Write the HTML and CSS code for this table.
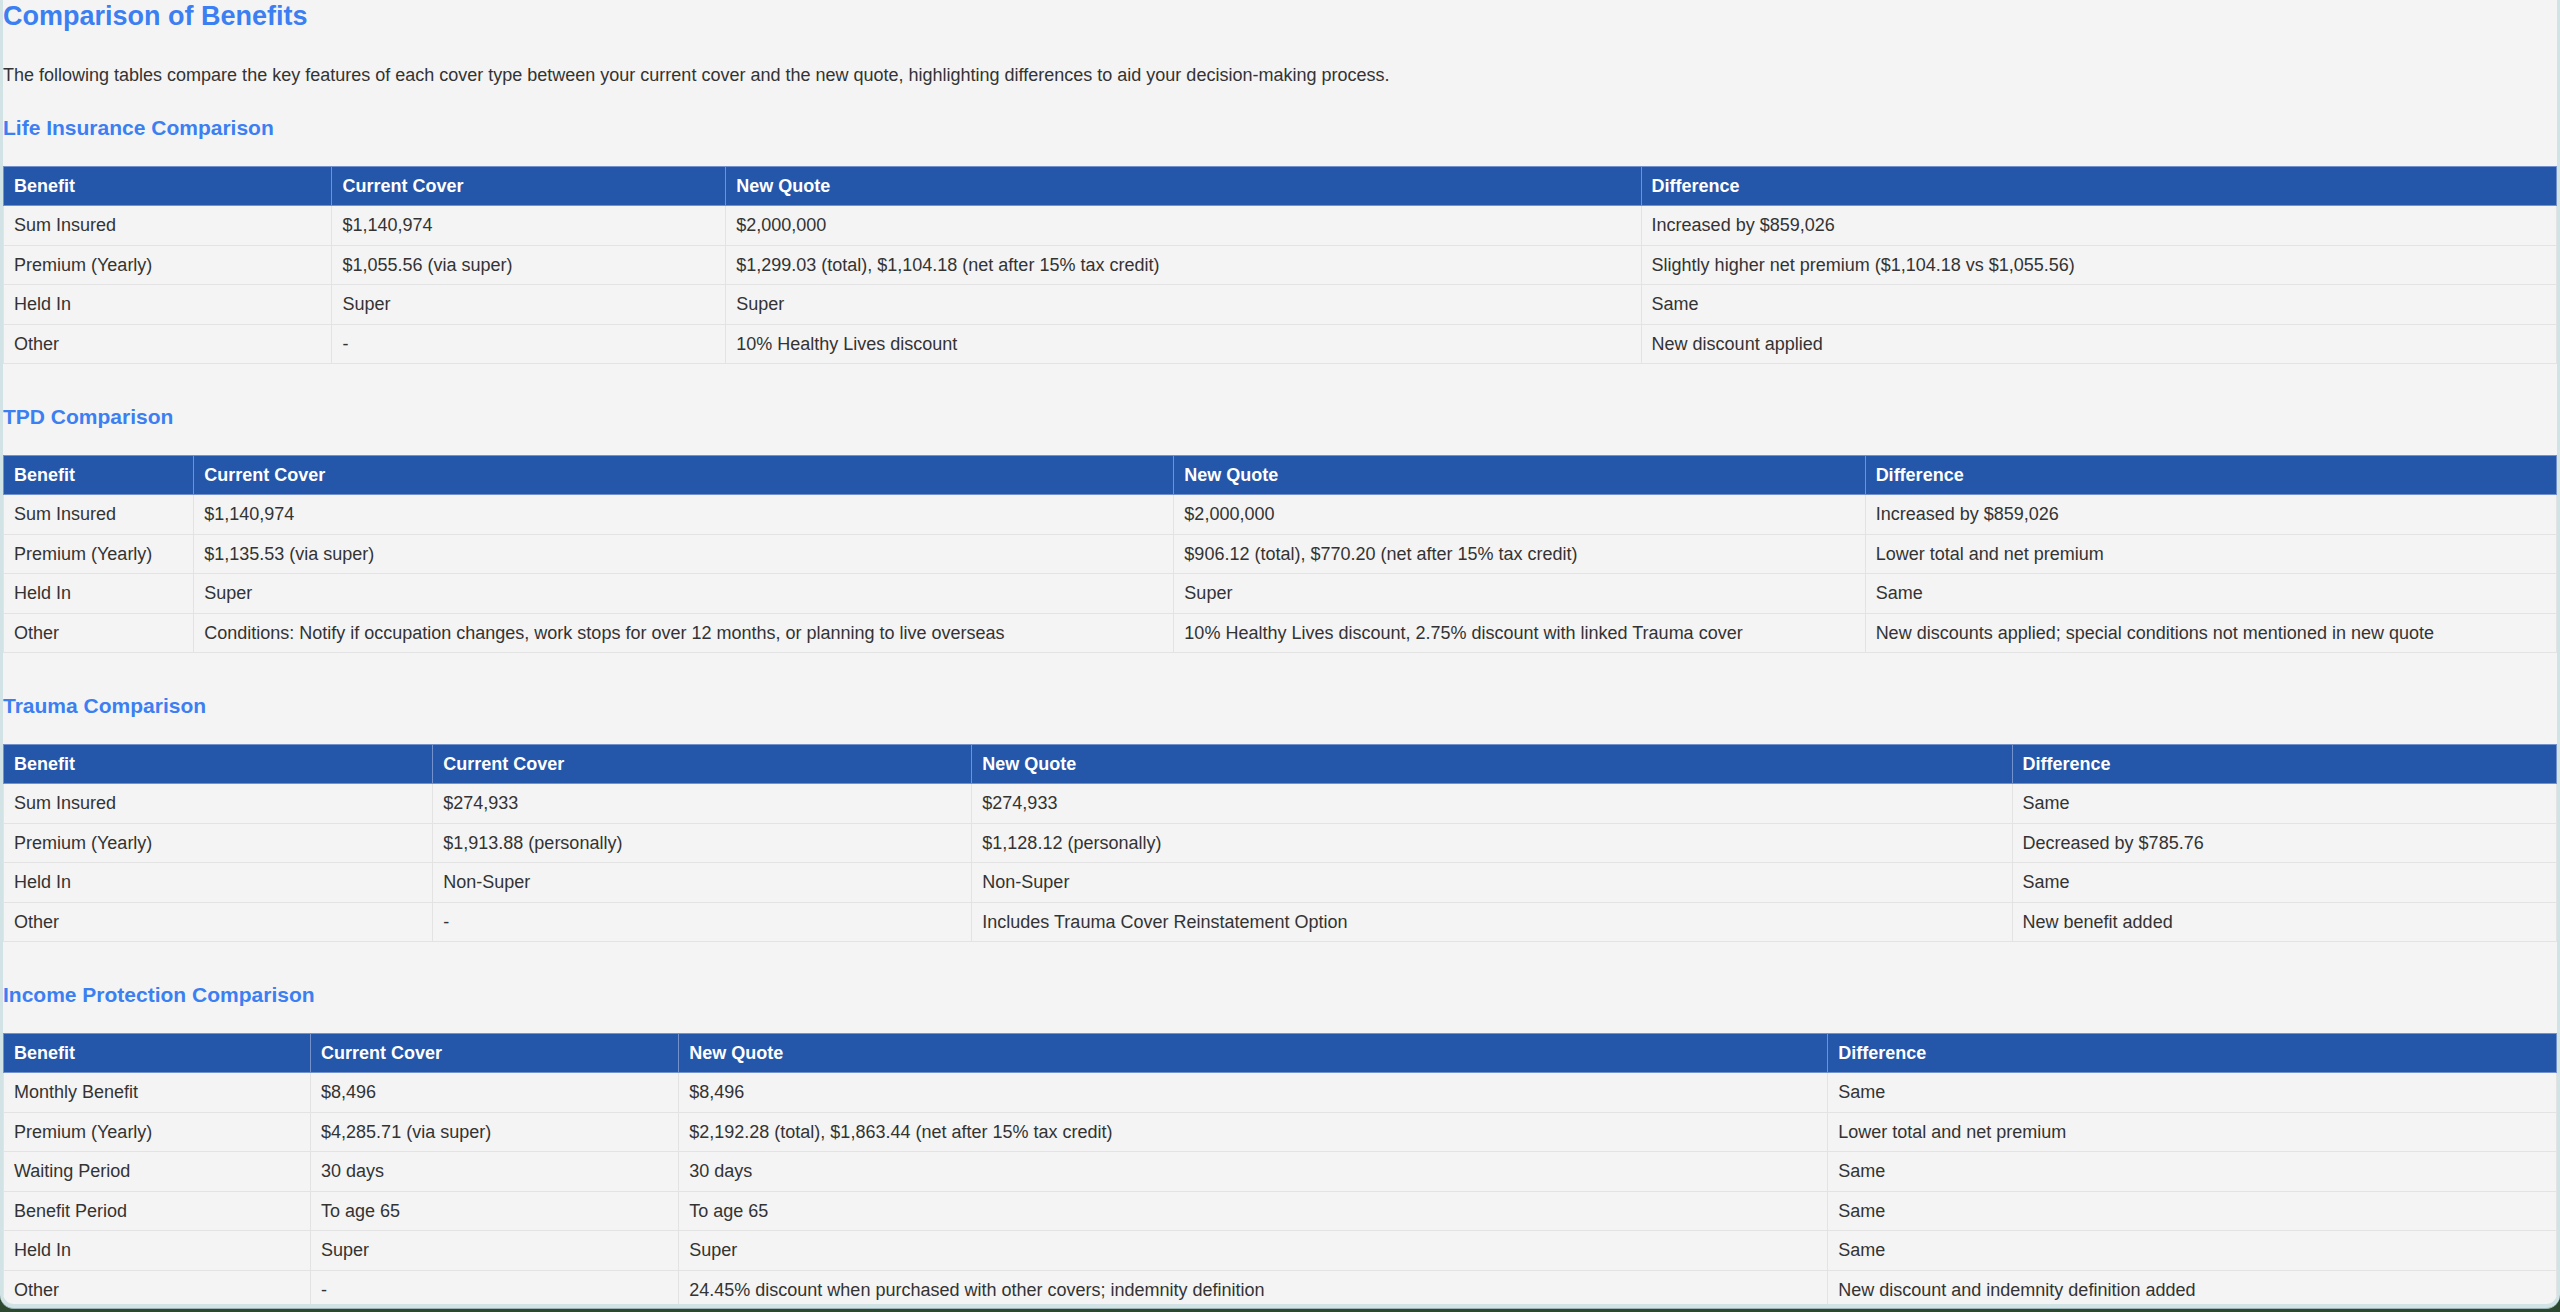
FILE: index.html
```html
<!DOCTYPE html>
<html lang="en">
<head>
  <meta charset="UTF-8" />
  <meta name="viewport" content="width=device-width, initial-scale=1.0"/>
  <title>Comparison of Benefits</title>
  <link rel="stylesheet" href="styles.css">
</head>
<body>

  <div class="window">
    <div class="page">

      <h2 class="title">Comparison of Benefits</h2>
      <p>The following tables compare the key features of each cover type between your current cover and the new quote, highlighting differences to aid your decision-making process.</p>

      <h3>Life Insurance Comparison</h3>
      <table class="compare">
        <tr><th>Benefit</th><th>Current Cover</th><th>New Quote</th><th>Difference</th></tr>
        <tr><td>Sum Insured</td><td>$1,140,974</td><td>$2,000,000</td><td>Increased by $859,026</td></tr>
        <tr><td>Premium (Yearly)</td><td>$1,055.56 (via super)</td><td>$1,299.03 (total), $1,104.18 (net after 15% tax credit)</td><td>Slightly higher net premium ($1,104.18 vs $1,055.56)</td></tr>
        <tr><td>Held In</td><td>Super</td><td>Super</td><td>Same</td></tr>
        <tr><td>Other</td><td>-</td><td>10% Healthy Lives discount</td><td>New discount applied</td></tr>
      </table>

      <h3>TPD Comparison</h3>
      <table class="compare">
        <tr><th>Benefit</th><th>Current Cover</th><th>New Quote</th><th>Difference</th></tr>
        <tr><td>Sum Insured</td><td>$1,140,974</td><td>$2,000,000</td><td>Increased by $859,026</td></tr>
        <tr><td>Premium (Yearly)</td><td>$1,135.53 (via super)</td><td>$906.12 (total), $770.20 (net after 15% tax credit)</td><td>Lower total and net premium</td></tr>
        <tr><td>Held In</td><td>Super</td><td>Super</td><td>Same</td></tr>
        <tr><td>Other</td><td>Conditions: Notify if occupation changes, work stops for over 12 months, or planning to live overseas</td><td>10% Healthy Lives discount, 2.75% discount with linked Trauma cover</td><td>New discounts applied; special conditions not mentioned in new quote</td></tr>
      </table>

      <h3>Trauma Comparison</h3>
      <table class="compare">
        <tr><th>Benefit</th><th>Current Cover</th><th>New Quote</th><th>Difference</th></tr>
        <tr><td>Sum Insured</td><td>$274,933</td><td>$274,933</td><td>Same</td></tr>
        <tr><td>Premium (Yearly)</td><td>$1,913.88 (personally)</td><td>$1,128.12 (personally)</td><td>Decreased by $785.76</td></tr>
        <tr><td>Held In</td><td>Non-Super</td><td>Non-Super</td><td>Same</td></tr>
        <tr><td>Other</td><td>-</td><td>Includes Trauma Cover Reinstatement Option</td><td>New benefit added</td></tr>
      </table>

      <h3>Income Protection Comparison</h3>
      <table class="compare">
        <tr><th>Benefit</th><th>Current Cover</th><th>New Quote</th><th>Difference</th></tr>
        <tr><td>Monthly Benefit</td><td>$8,496</td><td>$8,496</td><td>Same</td></tr>
        <tr><td>Premium (Yearly)</td><td>$4,285.71 (via super)</td><td>$2,192.28 (total), $1,863.44 (net after 15% tax credit)</td><td>Lower total and net premium</td></tr>
        <tr><td>Waiting Period</td><td>30 days</td><td>30 days</td><td>Same</td></tr>
        <tr><td>Benefit Period</td><td>To age 65</td><td>To age 65</td><td>Same</td></tr>
        <tr><td>Held In</td><td>Super</td><td>Super</td><td>Same</td></tr>
        <tr><td>Other</td><td>-</td><td>24.45% discount when purchased with other covers; indemnity definition</td><td>New discount and indemnity definition added</td></tr>
      </table>

    </div>
  </div>

</body>
</html>
```

FILE: styles.css
```css
body {
  margin: 0;
  background: #2d4a30;
  font-family: 'Liberation Sans', Arial, sans-serif;
  color: #333;
  font-size: 18px;
}
.window {
  height: 1309px;
  box-sizing: border-box;
  background: #d2e3e6;
  border-bottom: 1px solid #9db4b5;
  border-radius: 0 0 14px 14px;
  padding: 0 3px 4px 3px;
}
.page {
  height: 100%;
  background: #f4f4f4;
  border-radius: 0 0 11px 11px;
  overflow: hidden;
}
.title {
  color: #3b7ff2;
  font-size: 27px;
  line-height: 30px;
  margin: 1px 0 34px;
}
p {
  line-height: 21px;
  margin: 0 0 30px;
}
h3 {
  color: #3b7ff2;
  font-size: 21px;
  line-height: 24px;
  margin: 26px 0;
}
table.compare {
  width: 100%;
  border-collapse: collapse;
  margin-bottom: 41px;
}
.compare th, .compare td {
  text-align: left;
  line-height: 20px;
  padding: 9px 10px;
}
.compare td {
  line-height: 20.5px;
  border: 1px solid #e3e3e3;
}
.compare th {
  background: #2456aa;
  color: #fff;
  border: 1px solid #7391cc;
}
```
